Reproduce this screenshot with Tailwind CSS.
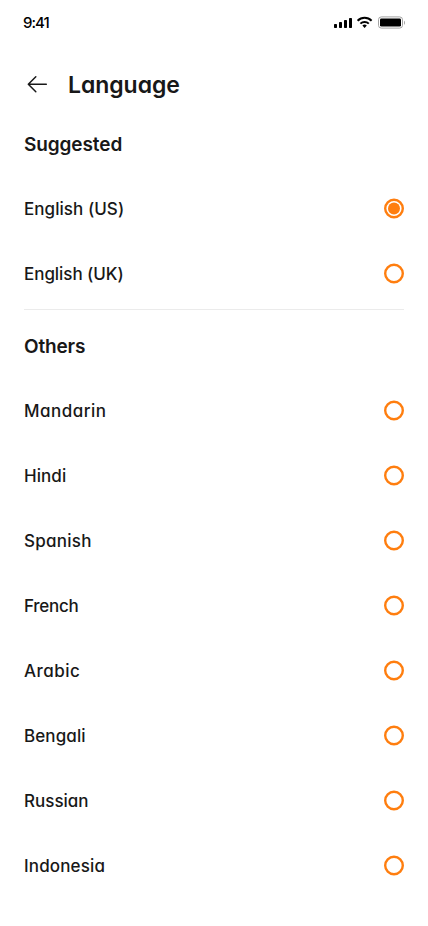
<!DOCTYPE html>
<html lang="en">
<head>
<meta charset="utf-8">
<title>Language</title>
<script src="https://cdn.jsdelivr.net/npm/@tailwindcss/browser@4"></script>
</head>
<body class="bg-white">
<svg class="hidden"><symbol id="radio" viewBox="0 0 20 21"><circle cx="10" cy="10.5" r="8.8" fill="none" stroke="#ff7e0f" stroke-width="2.4"/></symbol></svg>
<main class="w-[428px] h-[926px] overflow-hidden bg-white font-['Inter','Lato',sans-serif] [font-feature-settings:'cv11'_1,'ss03'_1] text-[#181818]">
  <header class="flex h-[44px] items-center justify-between pl-[23px] pr-[23px] text-black">
    <span class="pt-px text-[15px] font-medium leading-5 tracking-[-0.95px]">9:41</span>
    <svg width="72" height="14" viewBox="0 0 72 14" fill="none">
      <g fill="#000"><rect x="1" y="9" width="3" height="4" rx=".7"/><rect x="6" y="7" width="3" height="6" rx=".7"/><rect x="11" y="5" width="3" height="8" rx=".7"/><rect x="16" y="3" width="3" height="10" rx=".7"/></g>
      <g stroke="#000" stroke-width="2"><path d="M24.6 5.7a10 10 0 0 1 14 0"/><path d="M27.4 8.6a6 6 0 0 1 8.4 0"/></g>
      <path d="M31.6 13l-2.2-2.5a3.2 3.2 0 0 1 4.4 0z" fill="#000"/>
      <rect x="45.5" y="1.9" width="24" height="11.2" rx="2.8" stroke="#a3a3a3"/>
      <rect x="47" y="3.4" width="21" height="8.2" rx="1.4" fill="#000"/>
      <path d="M71 5.7v4c1.3-.6 1.3-3.4 0-4z" fill="#a3a3a3"/>
    </svg>
  </header>
  <div class="flex h-[80px] items-center pl-[27px]">
    <svg width="21" height="18" viewBox="0 0 21 18" fill="none" stroke="#181818" stroke-width="1.5" stroke-linecap="round" stroke-linejoin="round"><path d="M19.3 9.3H1.3M8.8 1.8L1.3 9.3l7.5 7.5"/></svg>
    <h1 class="ml-5 pt-px text-[23px] font-semibold leading-8 tracking-[-0.05px]">Language</h1>
  </div>
  <section class="mx-6 border-b border-[#ebebeb] h-[186px]">
    <h2 class="h-[40px] pt-px text-[19px] font-semibold leading-[40px] tracking-[-0.1px]">Suggested</h2>
    <ul class="mt-[12px] text-[17px] font-medium">
      <li class="flex h-[65px] items-center justify-between"><span class="pt-[2px] tracking-[0.05px]">English (US)</span><svg width="20" height="21"><use href="#radio"/><circle cx="10" cy="10.5" r="6" fill="#ff7e0f"/></svg></li>
      <li class="flex h-[65px] items-center justify-between"><span class="pt-[2px] tracking-[-0.05px]">English (UK)</span><svg width="20" height="21"><use href="#radio"/></svg></li>
    </ul>
  </section>
  <section class="mx-6 pt-4">
    <h2 class="h-[40px] pt-px text-[19px] font-semibold leading-[40px] tracking-[-0.15px]">Others</h2>
    <ul class="mt-[12px] text-[17px] font-medium">
      <li class="flex h-[65px] items-center justify-between"><span class="pt-[2px] tracking-[0.5px]">Mandarin</span><svg width="20" height="21"><use href="#radio"/></svg></li>
      <li class="flex h-[65px] items-center justify-between"><span class="pt-[2px] tracking-[0.05px]">Hindi</span><svg width="20" height="21"><use href="#radio"/></svg></li>
      <li class="flex h-[65px] items-center justify-between"><span class="pt-[2px] tracking-[0.25px]">Spanish</span><svg width="20" height="21"><use href="#radio"/></svg></li>
      <li class="flex h-[65px] items-center justify-between"><span class="pt-[2px] tracking-[-0.25px]">French</span><svg width="20" height="21"><use href="#radio"/></svg></li>
      <li class="flex h-[65px] items-center justify-between"><span class="pt-[2px] tracking-[0.5px]">Arabic</span><svg width="20" height="21"><use href="#radio"/></svg></li>
      <li class="flex h-[65px] items-center justify-between"><span class="pt-[2px] tracking-[0.1px]">Bengali</span><svg width="20" height="21"><use href="#radio"/></svg></li>
      <li class="flex h-[65px] items-center justify-between"><span class="pt-[2px]">Russian</span><svg width="20" height="21"><use href="#radio"/></svg></li>
      <li class="flex h-[65px] items-center justify-between"><span class="pt-[2px] tracking-[0.15px]">Indonesia</span><svg width="20" height="21"><use href="#radio"/></svg></li>
    </ul>
  </section>
</main>
</body>
</html>
